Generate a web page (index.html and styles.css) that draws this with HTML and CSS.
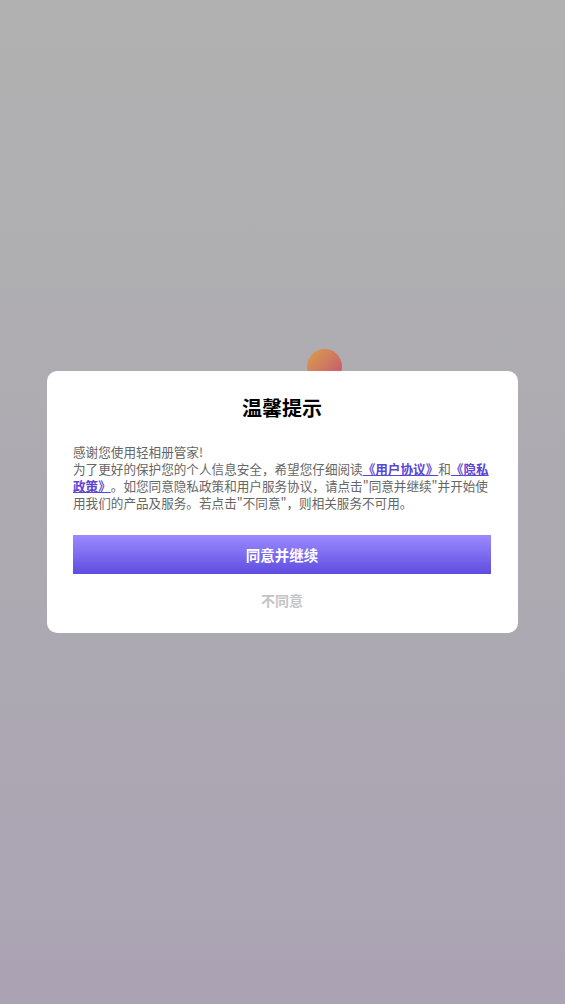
FILE: index.html
```html
<!DOCTYPE html>
<html lang="zh">
<head>
<meta charset="utf-8">
<title>温馨提示</title>
<link rel="stylesheet" href="styles.css">
</head>
<body>
<div class="screen">
  <div class="logo"></div>
  <div class="dialog">
    <h1 class="title">温馨提示</h1>
    <p class="text">感谢您使用轻相册管家!<br>为了更好的保护您的个人信息安全，希望您仔细阅读<a class="link">《用户协议》</a>和<a class="link">《隐私政策》</a>。如您同意隐私政策和用户服务协议，请点击"同意并继续"并开始使用我们的产品及服务。若点击"不同意"，则相关服务不可用。</p>
    <div class="agree">同意并继续</div>
    <div class="disagree">不同意</div>
  </div>
</div>
</body>
</html>
```
FILE: styles.css
```css
html, body {
  margin: 0;
  padding: 0;
}
body {
  font-family: "Noto Sans CJK SC", "Noto Sans", sans-serif;
}
.screen {
  position: relative;
  width: 565px;
  height: 1004px;
  background: linear-gradient(180deg, #b1b1b1 0%, #adabb1 50%, #aba3b4 100%);
  display: flex;
  align-items: center;
  justify-content: center;
  overflow: hidden;
}
.logo {
  position: absolute;
  left: 307px;
  top: 349px;
  width: 35px;
  height: 35px;
  border-radius: 50%;
  background: linear-gradient(135deg, #dba04a 0%, #cf7860 50%, #c64c72 100%);
}
.dialog {
  position: relative;
  width: 471px;
  box-sizing: border-box;
  padding: 22px 27px 23px 26px;
  background: #ffffff;
  border-radius: 10px;
  display: flex;
  flex-direction: column;
}
.title {
  margin: 0;
  font-size: 20px;
  line-height: 30px;
  font-weight: 700;
  color: #000000;
  text-align: center;
}
.text {
  margin: 20px 0 0;
  font-size: 12.6px;
  line-height: 17px;
  color: #666666;
  text-spacing-trim: space-all;
}
.link {
  color: #5a45d4;
  font-weight: 700;
  text-decoration: underline;
}
.agree {
  margin-top: 24px;
  height: 39px;
  display: flex;
  align-items: center;
  justify-content: center;
  background: linear-gradient(180deg, #9b8afe 0%, #7d6cf0 50%, #5f4cdf 100%);
  color: #ffffff;
  font-size: 14.5px;
  font-weight: 700;
}
.disagree {
  margin-top: 16px;
  line-height: 20px;
  text-align: center;
  font-size: 14px;
  font-weight: 700;
  color: #c4c4c4;
}
```
